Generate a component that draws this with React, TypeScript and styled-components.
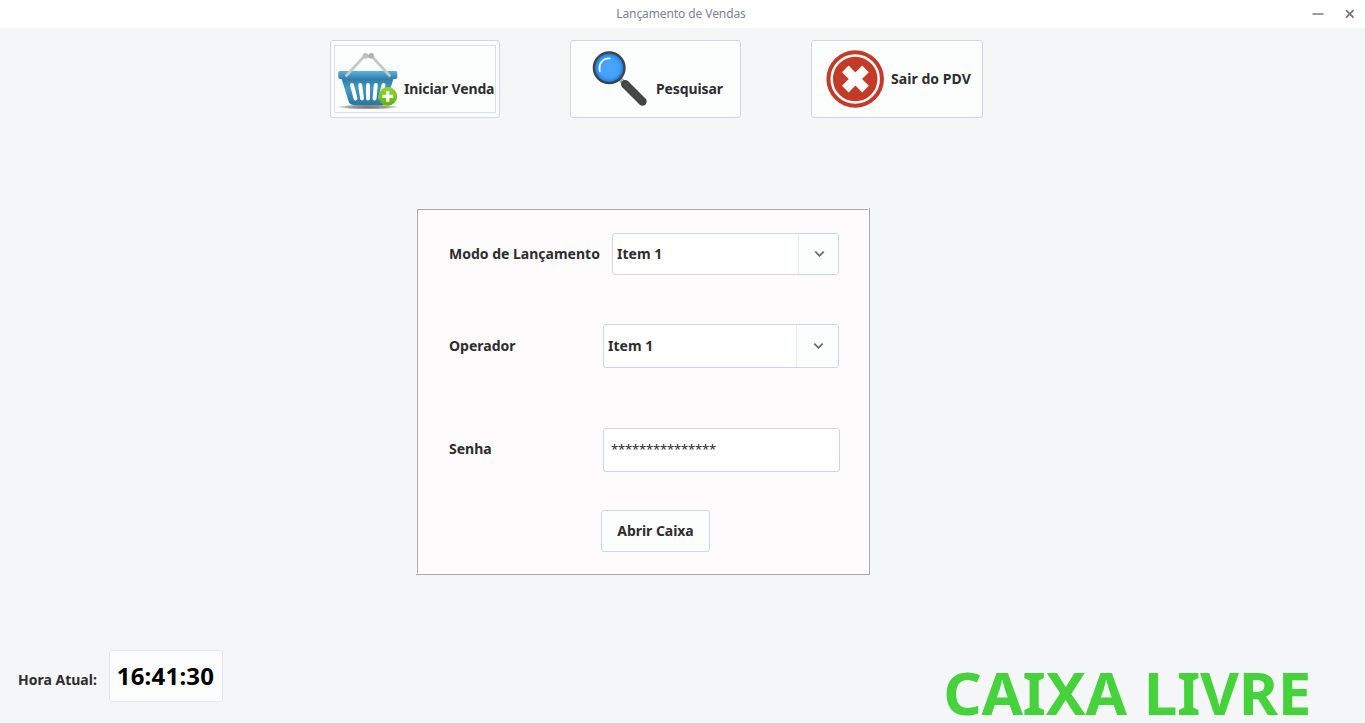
import React from "react";
import styled, { createGlobalStyle } from "styled-components";

const GlobalStyle = createGlobalStyle`
  * { box-sizing: border-box; }
  html, body { margin: 0; padding: 0; overflow: hidden; }
  body { background: #f4f6f8; font-family: "Noto Sans", "Open Sans", sans-serif; color: #2d2d2f; }
`;

const Window = styled.div`
  width: 1365px;
  height: 723px;
  display: flex;
  flex-direction: column;
  background: #f4f6f8;
`;

const TitleBar = styled.header`
  flex: none;
  height: 28px;
  background: #ffffff;
  display: grid;
  grid-template-columns: 1fr auto 1fr;
  align-items: center;
  padding-right: 10px;
  padding-left: 7px;
`;

const Title = styled.h1`
  grid-column: 2;
  margin: 0;
  font-size: 12px;
  font-weight: 400;
  line-height: 28px;
  letter-spacing: -0.09px;
  color: #7e8295;
`;

const WindowControls = styled.div`
  display: flex;
  justify-content: flex-end;
  gap: 21px;
`;

const Toolbar = styled.nav`
  flex: none;
  display: flex;
  gap: 70px;
  padding: 12px 0 0 330px;
`;

const Button = styled.button`
  font: inherit;
  font-size: 14px;
  font-weight: 700;
  line-height: 20px;
  color: inherit;
  white-space: nowrap;
  background: #fcfefd;
  border: 1px solid #cdd5e8;
  border-radius: 3px;
  padding: 0;
`;

const ToolButton = styled(Button)<{ $width: number; $inset: number; $gap: number }>`
  position: relative;
  width: ${(p) => p.$width}px;
  height: 78px;
  display: flex;
  align-items: center;
  gap: ${(p) => p.$gap}px;
  padding-left: ${(p) => p.$inset}px;
  svg { flex: none; display: block; }
`;

const FocusRing = styled.span`
  position: absolute;
  inset: 4px 3px;
  border: 1px solid #d9dff0;
`;

const ToolLabel = styled.span<{ $drop?: number; $tracking: number }>`
  padding-top: ${(p) => p.$drop ?? 0}px;
  letter-spacing: ${(p) => p.$tracking}px;
`;

const Panel = styled.form`
  flex: none;
  width: 454px;
  height: 367px;
  margin: 90px 0 0 416px;
  box-shadow:
    inset 0 -1px #a9a8aa, inset -1px 0 #a9a8aa,
    inset 1px 0 #fbfbfc, inset 0 1px #fbfbfc,
    inset 0 -2px #ffffff, inset -2px 0 #ffffff,
    inset 2px 0 #a9a8aa, inset 0 2px #a9a8aa;
  background: #fdfbfc;
  padding: 25px 0 0 33px;
`;

const Field = styled.div<{ $height: number; $after: number }>`
  height: ${(p) => p.$height}px;
  margin-bottom: ${(p) => p.$after}px;
  display: flex;
  align-items: center;
`;

const Label = styled.label<{ $width?: number; $lift?: number }>`
  flex: none;
  width: ${(p) => (p.$width ? p.$width + "px" : "auto")};
  padding-bottom: ${(p) => p.$lift ?? 0}px;
  font-size: 14px;
  font-weight: 700;
  line-height: 20px;
  white-space: nowrap;
`;

const Combo = styled.div<{ $width: number }>`
  width: ${(p) => p.$width}px;
  height: 100%;
  display: flex;
  align-items: stretch;
  background: #ffffff;
  border: 1px solid #cdd5e8;
  border-radius: 3px;
  overflow: hidden;
`;

const ComboValue = styled.span`
  flex: 1;
  display: flex;
  align-items: center;
  padding: 0 0 1px 4px;
  font-size: 14px;
  line-height: 20px;
  font-weight: 700;
`;

const ComboArrow = styled.span<{ $width: number }>`
  width: ${(p) => p.$width}px;
  display: flex;
  align-items: center;
  justify-content: center;
  background: #fcfefd;
  border-left: 1px solid #e6ecf1;
`;

const Password = styled.div`
  width: 237px;
  height: 100%;
  display: flex;
  align-items: center;
  padding: 0 0 2px 7px;
  background: #ffffff;
  border: 1px solid #cdd5e8;
  border-radius: 3px;
  font-size: 13px;
  letter-spacing: -0.17px;
`;

const OpenButton = styled(Button)`
  display: block;
  width: 109px;
  height: 42px;
  margin-left: 152px;
  letter-spacing: -0.06px;
`;

const Footer = styled.footer`
  flex: 1;
  min-height: 0;
  display: flex;
  justify-content: space-between;
  align-items: flex-start;
  padding: 75px 54px 0 18px;
`;

const ClockGroup = styled.div`
  display: flex;
  align-items: flex-start;
`;

const ClockLabel = styled(Label)`
  padding-top: 20px;
`;

const Clock = styled.time`
  width: 114px;
  height: 52px;
  display: flex;
  align-items: center;
  justify-content: center;
  padding: 0 1px 2px 0;
  background: #fcfefd;
  border: 1px solid #e2e5ef;
  border-radius: 3px;
  color: #000000;
  font-size: 24px;
  letter-spacing: 0.2px;
  font-weight: 700;
`;

const Status = styled.strong`
  font-size: 60px;
  line-height: 66px;
  margin-top: 8.5px;
  font-weight: 700;
  letter-spacing: -0.3px;
  word-spacing: 1.6px;
  color: #46d23a;
  white-space: nowrap;
`;

const BasketIcon = () => (
  <svg width="62" height="60" viewBox="0 -3 62 60">
    <defs>
      <linearGradient id="basketBody" x1="0" y1="0" x2="0" y2="1">
        <stop offset="0" stopColor="#2c789f" />
        <stop offset="0.4" stopColor="#4599c2" />
        <stop offset="1" stopColor="#2776a2" />
      </linearGradient>
      <linearGradient id="basketRim" x1="0" y1="0" x2="0" y2="1">
        <stop offset="0" stopColor="#5cb2d7" />
        <stop offset="1" stopColor="#2d83b0" />
      </linearGradient>
      <radialGradient id="basketShadow">
        <stop offset="0" stopColor="#707070" />
        <stop offset="0.65" stopColor="#a2a2a2" />
        <stop offset="1" stopColor="#a2a2a2" stopOpacity="0" />
      </radialGradient>
      <linearGradient id="plusFill" x1="0" y1="0" x2="0" y2="1">
        <stop offset="0" stopColor="#93d62c" />
        <stop offset="1" stopColor="#60b20c" />
      </linearGradient>
    </defs>
    <ellipse cx="31" cy="55" rx="31" ry="2.600" fill="url(#basketShadow)" />
    <path d="M4 25H57L49 50.500Q48 53.300 44 53.300H18Q14 53.300 12 50.500Z" fill="url(#basketBody)" />
    <path d="M2.800 19H58.800Q60.300 19 60.300 20.500V25Q60.300 27 57.300 27H4.300Q1.300 27 1.300 25V20.500Q1.300 19 2.800 19Z" fill="url(#basketRim)" />
    <path d="M15 33L18.500 46.500M23.200 33L25 46.500M31 33V46.500M38.800 33L37.500 46.500M46.500 33L43.500 46" stroke="#fff" strokeWidth="3.900" strokeLinecap="round" />
    <path d="M9.500 23.500L27.500 4M52.500 23.500L34.500 4" stroke="#c6c7c8" strokeWidth="2.800" strokeLinecap="round" />
    <path d="M26.500 4.500H35.500" stroke="#b8b9ba" strokeWidth="2.600" />
    <circle cx="28.500" cy="3.800" r="2.800" fill="#bcbdbe" />
    <circle cx="34.200" cy="3.800" r="2.800" fill="#b0b1b3" />
    <circle cx="50.800" cy="44.400" r="9.300" fill="url(#plusFill)" />
    <path d="M50.800 39V49.800M45.400 44.400H56.200" stroke="#fff" strokeWidth="3.200" />
  </svg>
);

const MagnifierIcon = () => (
  <svg width="56" height="56" viewBox="0 0 56 56">
    <defs>
      <radialGradient id="lensFill">
        <stop offset="0" stopColor="#4aa6fa" />
        <stop offset="0.65" stopColor="#45a1f7" />
        <stop offset="1" stopColor="#0878e5" />
      </radialGradient>
    </defs>
    <path d="M27.500 27.500L34 34" stroke="#aeb0b0" strokeWidth="5" />
    <path d="M33.200 33.200L50.500 50.500" stroke="#434444" strokeWidth="8.400" strokeLinecap="round" />
    <path d="M33 33L50 50" stroke="#555656" strokeWidth="2" strokeDasharray="1 2" />
    <circle cx="17.200" cy="16.800" r="15.300" fill="url(#lensFill)" stroke="#424344" strokeWidth="2.400" />
    <path d="M7.800 20.300C6.300 12.500 10.500 7.200 17.700 7.400" fill="none" stroke="#e8f5ff" strokeWidth="1.900" strokeLinecap="round" />
  </svg>
);

const ExitIcon = () => (
  <svg width="58" height="58" viewBox="0 0 58 58">
    <circle cx="29.200" cy="29" r="28.800" fill="#c33b28" />
    <circle cx="29.200" cy="29" r="23.500" fill="#c33b28" stroke="#fff" strokeWidth="2.500" />
    <path transform="translate(0.400 0)" d="M22.200 15.600L29 22.400L35.800 15.600L42.400 22.200L35.600 29L42.400 35.800L35.800 42.400L29 35.600L22.200 42.400L15.600 35.800L22.400 29L15.600 22.200Z" fill="#fff" />
  </svg>
);

const Chevron = () => (
  <svg width="12" height="10" viewBox="0 0 12 10">
    <path d="M2.300 2.600L6.500 6.800L10.700 2.600" fill="none" stroke="#66686d" strokeWidth="1.800" />
  </svg>
);

export default function App() {
  return (
    <>
      <GlobalStyle />
      <Window>
        <TitleBar>
          <Title>Lançamento de Vendas</Title>
          <WindowControls>
            <svg width="12" height="10" viewBox="0 0 12 10">
              <path d="M0.500 5H11.500" stroke="#77787b" strokeWidth="1.500" />
            </svg>
            <svg width="10" height="10" viewBox="0 0 10 10">
              <path d="M1 1.200L8.500 8.700M8.500 1.200L1 8.700" stroke="#737477" strokeWidth="1.700" />
            </svg>
          </WindowControls>
        </TitleBar>
        <Toolbar>
          <ToolButton $width={170} $inset={6} $gap={5}>
            <FocusRing />
            <BasketIcon />
            <ToolLabel $drop={19} $tracking={-0.12}>Iniciar Venda</ToolLabel>
          </ToolButton>
          <ToolButton $width={171} $inset={21} $gap={8}>
            <MagnifierIcon />
            <ToolLabel $drop={19} $tracking={-0.1}>Pesquisar</ToolLabel>
          </ToolButton>
          <ToolButton $width={172} $inset={14} $gap={7}>
            <ExitIcon />
            <ToolLabel $tracking={0.05}>Sair do PDV</ToolLabel>
          </ToolButton>
        </Toolbar>
        <Panel>
          <Field $height={42} $after={49}>
            <Label $width={163}>Modo de Lançamento</Label>
            <Combo $width={227}>
              <ComboValue>Item 1</ComboValue>
              <ComboArrow $width={40}><Chevron /></ComboArrow>
            </Combo>
          </Field>
          <Field $height={44} $after={60}>
            <Label $width={154}>Operador</Label>
            <Combo $width={236}>
              <ComboValue>Item 1</ComboValue>
              <ComboArrow $width={42}><Chevron /></ComboArrow>
            </Combo>
          </Field>
          <Field $height={44} $after={38}>
            <Label $width={154} $lift={2}>Senha</Label>
            <Password>***************</Password>
          </Field>
          <OpenButton type="button">Abrir Caixa</OpenButton>
        </Panel>
        <Footer>
          <ClockGroup>
            <ClockLabel $width={91}>Hora Atual:</ClockLabel>
            <Clock>16:41:30</Clock>
          </ClockGroup>
          <Status>CAIXA LIVRE</Status>
        </Footer>
      </Window>
    </>
  );
}
